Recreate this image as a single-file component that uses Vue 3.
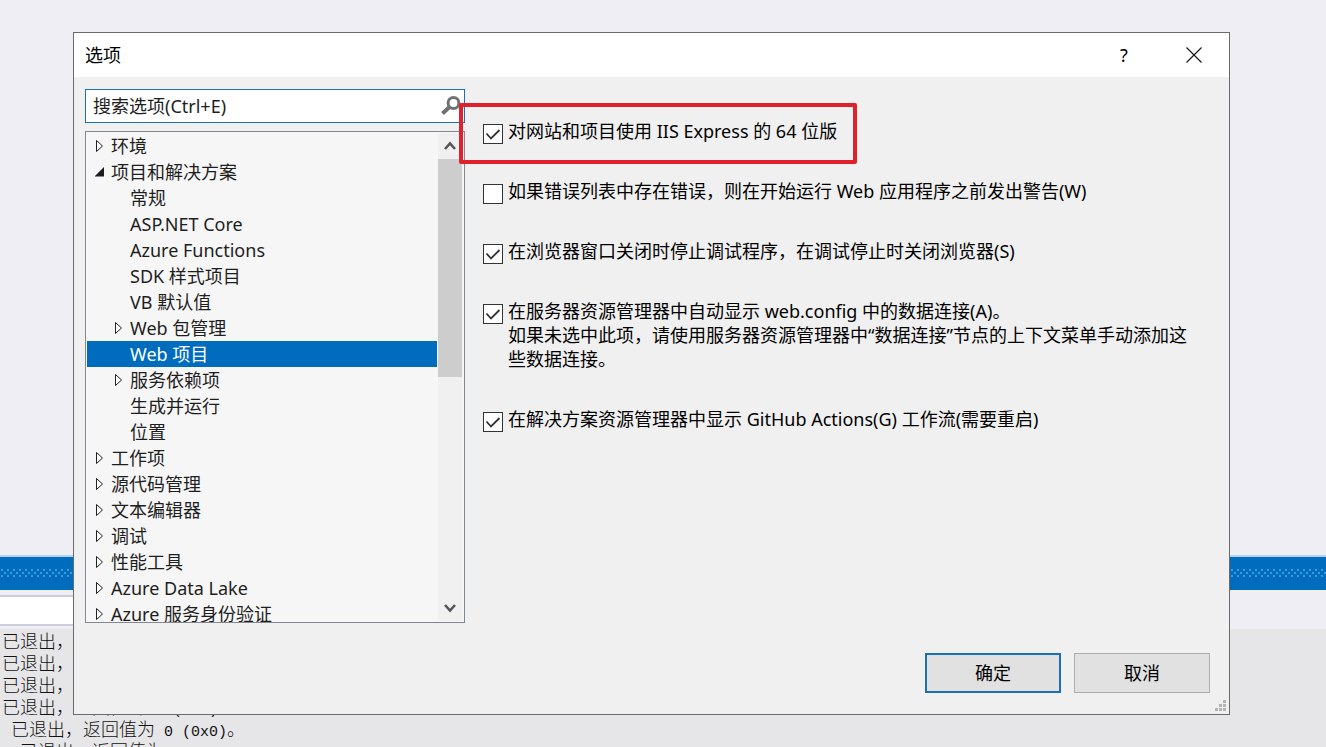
<script setup>
import { ref } from 'vue'

const query = ref('')
const selected = ref('Web 项目')

const tree = [
  { label: '环境', level: 1, arrow: 'closed' },
  { label: '项目和解决方案', level: 1, arrow: 'open' },
  { label: '常规', level: 2 },
  { label: 'ASP.NET Core', level: 2 },
  { label: 'Azure Functions', level: 2 },
  { label: 'SDK 样式项目', level: 2 },
  { label: 'VB 默认值', level: 2 },
  { label: 'Web 包管理', level: 2, arrow: 'closed' },
  { label: 'Web 项目', level: 2 },
  { label: '服务依赖项', level: 2, arrow: 'closed' },
  { label: '生成并运行', level: 2 },
  { label: '位置', level: 2 },
  { label: '工作项', level: 1, arrow: 'closed' },
  { label: '源代码管理', level: 1, arrow: 'closed' },
  { label: '文本编辑器', level: 1, arrow: 'closed' },
  { label: '调试', level: 1, arrow: 'closed' },
  { label: '性能工具', level: 1, arrow: 'closed' },
  { label: 'Azure Data Lake', level: 1, arrow: 'closed' },
  { label: 'Azure 服务身份验证', level: 1, arrow: 'closed' },
]

const options = ref([
  { id: 'iis', lines: ['对网站和项目使用 IIS Express 的 64 位版'], checked: true, marked: true },
  { id: 'warn', lines: ['如果错误列表中存在错误，则在开始运行 Web 应用程序之前发出警告(W)'], checked: false },
  { id: 'stop', lines: ['在浏览器窗口关闭时停止调试程序，在调试停止时关闭浏览器(S)'], checked: true },
  {
    id: 'conn',
    lines: [
      '在服务器资源管理器中自动显示 web.config 中的数据连接(A)。',
      '如果未选中此项，请使用服务器资源管理器中“数据连接”节点的上下文菜单手动添加这些数据连接。',
    ],
    checked: true,
  },
  { id: 'github', lines: ['在解决方案资源管理器中显示 GitHub Actions(G) 工作流(需要重启)'], checked: true },
])

const log = [
  { text: '已退出，' },
  { text: '已退出，' },
  { text: '已退出，' },
  { text: '已退出，返回值为', code: ' 0 (0x0)', end: '。' },
  { text: '已退出，返回值为', code: ' 0 (0x0)', end: '。', indent: true },
  { quote: '"', text: '已退出，返回值为', code: ' -1073741510 (0xc000013a)', end: '。', indent: true },
]
</script>

<template>
  <div class="desktop">
    <div class="ide" aria-hidden="true">
      <div class="editor"></div>
      <div class="tool-title">
        <svg class="grip" width="100%" height="10">
          <defs>
            <pattern id="grip-dots" width="6" height="10" patternUnits="userSpaceOnUse">
              <rect x="1" y="0" width="2" height="2" />
              <rect x="4" y="3" width="2" height="2" />
              <rect x="1" y="6" width="2" height="2" />
            </pattern>
          </defs>
          <rect width="100%" height="10" fill="url(#grip-dots)" />
        </svg>
      </div>
      <div class="tool-bar"><div class="combo"></div></div>
      <div class="output">
        <div v-for="(line, i) in log" :key="i" class="log-line" :class="{ indent: line.indent }">
          <span v-if="line.quote" class="code">{{ line.quote }}</span>{{ line.text }}<span v-if="line.code" class="code">{{ line.code }}</span>{{ line.end }}
        </div>
      </div>
    </div>

    <main class="dialog" role="dialog" aria-labelledby="dialog-title">
      <header class="title-bar">
        <h1 id="dialog-title">选项</h1>
        <button class="caption" type="button">?</button>
        <button class="caption" type="button" aria-label="关闭">
          <svg width="16" height="16" viewBox="0 0 16 16">
            <path d="M.5.5l15 15M15.5.5l-15 15" fill="none" stroke="#111" stroke-width="1.1" />
          </svg>
        </button>
      </header>

      <div class="content">
        <div class="side">
          <div class="search">
            <input v-model="query" type="text" placeholder="搜索选项(Ctrl+E)" aria-label="搜索选项" />
            <svg width="20" height="20" viewBox="0 0 20 20">
              <circle cx="12.5" cy="7" r="5.4" fill="none" stroke="#717171" stroke-width="3" />
              <path d="M8.5 11L1.5 17.5" stroke="#717171" stroke-width="4" />
            </svg>
          </div>

          <div class="tree-box">
            <ul class="tree" role="tree">
              <li
                v-for="node in tree"
                :key="node.label"
                role="treeitem"
                class="node"
                :class="['level-' + node.level, { selected: selected === node.label }]"
                @click="selected = node.label"
              >
                <span class="arrow">
                  <svg v-if="node.arrow === 'closed'" width="10" height="14" viewBox="0 0 10 14">
                    <path d="M1.5 1.5v11L7.5 7z" fill="#fff" stroke="#222" />
                  </svg>
                  <svg v-else-if="node.arrow === 'open'" width="10" height="14" viewBox="0 0 10 14">
                    <path d="M9 2v9.500H-.5z" fill="#1b1b1b" />
                  </svg>
                </span>
                <span>{{ node.label }}</span>
              </li>
            </ul>
            <div class="scrollbar">
              <button type="button" aria-label="向上滚动">
                <svg width="12" height="10" viewBox="0 0 12 10">
                  <path d="M1 8l5-5.500L11 8" fill="none" stroke="#555" stroke-width="2.6" />
                </svg>
              </button>
              <div class="track"><div class="thumb"></div></div>
              <button type="button" aria-label="向下滚动">
                <svg width="12" height="10" viewBox="0 0 12 10">
                  <path d="M1 2l5 5.500L11 2" fill="none" stroke="#555" stroke-width="2.6" />
                </svg>
              </button>
            </div>
          </div>
        </div>

        <div class="options">
          <label v-for="opt in options" :key="opt.id" class="option" :class="{ marked: opt.marked }">
            <span class="check">
              <input v-model="opt.checked" type="checkbox" />
              <svg v-if="opt.checked" width="20" height="20" viewBox="0 0 20 20">
                <path d="M3.500 9.500l4.500 5L16.500 6" fill="none" stroke="#333" stroke-width="1.8" />
              </svg>
            </span>
            <span>
              <span v-for="text in opt.lines" :key="text" class="line">{{ text }}</span>
            </span>
          </label>
        </div>
      </div>

      <footer class="footer">
        <button class="action primary" type="button">确定</button>
        <button class="action" type="button">取消</button>
      </footer>

      <svg class="resize" width="12" height="12" viewBox="0 0 12 12" fill="#b4b4b4">
        <path d="M8 0h3v3H8zM4 4h3v3H4zM8 4h3v3H8zM0 8h3v3H0zM4 8h3v3H4zM8 8h3v3H8z" />
      </svg>
    </main>
  </div>
</template>

<style>
body {
  background: #eeeef2;
}
</style>

<style scoped>
.desktop {
  position: relative;
  box-sizing: border-box;
  min-height: 100vh;
  padding: 32px 96px 32px 73px;
  overflow: hidden;
  display: flex;
  font-family: "Noto Sans", "Noto Sans CJK SC", sans-serif;
  font-size: 18px;
  font-weight: 400;
  line-height: 24px;
  color: #000;
}

.ide {
  position: absolute;
  inset: 0;
  display: flex;
  flex-direction: column;
  background: #eeeef4;
}
.editor {
  flex: 1;
}
.tool-title {
  box-sizing: border-box;
  height: 35px;
  padding-top: 12px;
  border-top: 2px solid #b5d3f0;
  background: #006cbe;
}
.grip {
  display: block;
  fill: #3f97dc;
}
.tool-bar {
  box-sizing: border-box;
  height: 39px;
  padding: 5px 0;
}
.combo {
  box-sizing: border-box;
  width: 200px;
  height: 31px;
  border: 2px solid #cccedb;
  border-left: 0;
  background: #fff;
}
.output {
  height: 118px;
  overflow: hidden;
  background: #e6e6e8;
  font-family: "Noto Sans CJK SC", sans-serif;
  line-height: 22px;
  font-weight: 300;
  color: #111;
}
.log-line {
  height: 22px;
  padding-left: 2px;
  white-space: pre;
}
.log-line.indent {
  padding-left: 11px;
}
.code {
  font-family: "Liberation Mono", monospace;
  font-size: 15px;
}

.dialog {
  position: relative;
  box-sizing: border-box;
  flex: 1;
  display: flex;
  flex-direction: column;
  border: 1px solid #6b6b6e;
  background: #f0f0f0;
}
.title-bar {
  display: flex;
  height: 44px;
  background: #fff;
}
.title-bar h1 {
  flex: 1;
  margin: 0;
  padding-left: 11px;
  font-size: 18px;
  font-weight: inherit;
  line-height: 44px;
}
.caption {
  display: flex;
  align-items: center;
  justify-content: center;
  width: 70px;
  padding: 0;
  border: 0;
  background: none;
  font: inherit;
  color: inherit;
}

.content {
  flex: 1;
  display: flex;
  gap: 18px;
  padding: 12px 30px 0 11px;
}
.side {
  flex: none;
  width: 380px;
  display: flex;
  flex-direction: column;
  gap: 8px;
}
.search {
  display: flex;
  align-items: center;
  box-sizing: border-box;
  height: 34px;
  padding: 0 3px 0 7px;
  border: 1px solid #1c6fb5;
  background: #fff;
}
.search input {
  flex: 1;
  min-width: 0;
  padding: 0;
  border: 0;
  outline: 0;
  background: none;
  font: inherit;
}
.search input::placeholder {
  color: #1e1e1e;
  opacity: 1;
}
.tree-box {
  flex: 1 1 0;
  min-height: 0;
  display: flex;
  border: 1px solid #828790;
  background: #f6f6f6;
}
.tree {
  flex: 1;
  height: 0;
  min-height: 100%;
  box-sizing: border-box;
  margin: 0;
  padding: 1px 0 0 1px;
  overflow: hidden;
  list-style: none;
  color: #1e1e1e;
}
.node {
  display: flex;
  align-items: center;
  height: 26px;
  white-space: nowrap;
}
.arrow {
  display: flex;
  width: 16px;
}
.level-1 {
  padding-left: 8px;
}
.level-2 {
  padding-left: 27px;
}
.selected {
  background: #006cbe;
  color: #fff;
}
.scrollbar {
  display: flex;
  flex-direction: column;
  width: 24px;
  margin: 1px 2px 1px 1px;
  background: #f0f0f0;
}
.scrollbar button {
  display: flex;
  align-items: center;
  justify-content: center;
  height: 26px;
  padding: 0;
  border: 0;
  background: none;
}
.track {
  flex: 1;
}
.thumb {
  height: 50%;
  background: #cdcdcd;
}

.options {
  flex: 1;
  display: flex;
  flex-direction: column;
  align-items: flex-start;
  gap: 36px;
  padding-top: 30px;
}
.option {
  position: relative;
  display: flex;
  gap: 5px;
}
.marked::before {
  content: "";
  position: absolute;
  inset: -16px -20px -21px -24px;
  border: 4px solid #e0202a;
  border-radius: 2px;
  pointer-events: none;
}
.check {
  position: relative;
  flex: none;
  width: 20px;
  height: 20px;
  margin: 5px 0 -1px;
}
.check input {
  appearance: none;
  display: block;
  box-sizing: border-box;
  width: 20px;
  height: 20px;
  margin: 0;
  border: 1px solid #333;
  background: #fff;
}
.check svg {
  position: absolute;
  inset: 0;
  pointer-events: none;
}
.line {
  display: block;
}

.footer {
  display: flex;
  justify-content: flex-end;
  gap: 13px;
  padding: 30px 19px 21px;
}
.action {
  width: 136px;
  height: 40px;
  padding: 0;
  border: 1px solid #adadad;
  background: #e1e1e1;
  font: inherit;
  color: inherit;
}
.primary {
  border: 2px solid #1c6fb5;
}
.resize {
  position: absolute;
  right: 2px;
  bottom: 2px;
}
</style>
